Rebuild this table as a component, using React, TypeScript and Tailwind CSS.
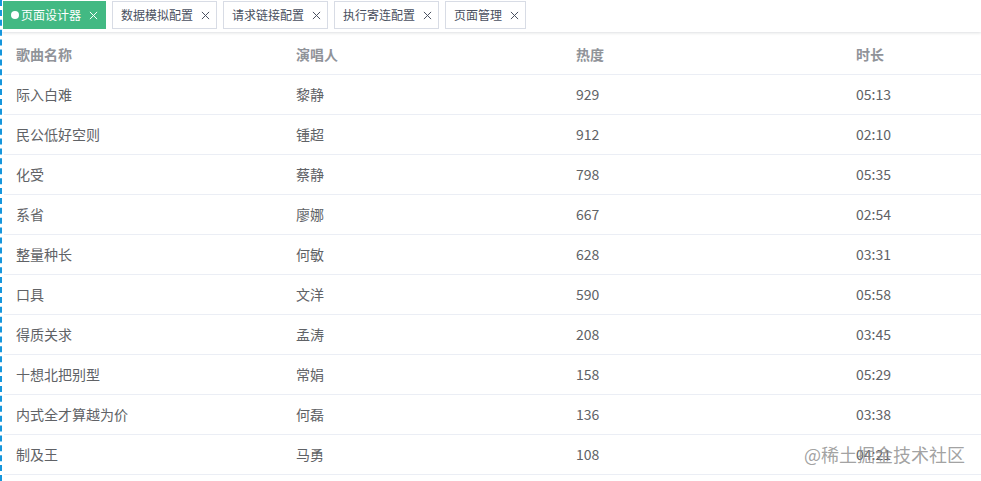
const tabs = [
  { title: "页面设计器", active: true },
  { title: "数据模拟配置" },
  { title: "请求链接配置" },
  { title: "执行寄连配置" },
  { title: "页面管理" },
];

const songs = [
  ["际入白难", "黎静", "929", "05:13"],
  ["民公低好空则", "锺超", "912", "02:10"],
  ["化受", "蔡静", "798", "05:35"],
  ["系省", "廖娜", "667", "02:54"],
  ["整量种长", "何敏", "628", "03:31"],
  ["口具", "文洋", "590", "05:58"],
  ["得质关求", "孟涛", "208", "03:45"],
  ["十想北把别型", "常娟", "158", "05:29"],
  ["内式全才算越为价", "何磊", "136", "03:38"],
  ["制及王", "马勇", "108", "04:21"],
];

function CloseIcon() {
  return (
    <svg width="9" height="9" viewBox="0 0 10 10" className="ml-2">
      <path d="M1 1 L9 9 M9 1 L1 9" stroke="currentColor" strokeWidth="1.1" />
    </svg>
  );
}

export default function App() {
  return (
    <div
      className="relative h-[481px] w-[981px] overflow-hidden border-l-2 border-dashed border-[#1596dc] bg-white"
      style={{ fontFamily: '"Noto Sans CJK SC", "Microsoft YaHei", sans-serif' }}
    >
      <div className="flex h-[32px] items-start gap-[6px] bg-white pl-[1px] pt-[1px] shadow-[0_1px_3px_rgba(0,21,41,0.12),0_0_3px_rgba(0,0,0,0.04)]">
        {tabs.map((tab) =>
          tab.active ? (
            <div
              key={tab.title}
              className="flex h-[28px] items-center border border-[#42b983] bg-[#42b983] pl-[7px] pr-[7px] text-[12px] text-white"
            >
              <span className="mr-[2px] h-[8px] w-[8px] rounded-full bg-white" />
              {tab.title}
              <CloseIcon />
            </div>
          ) : (
            <div
              key={tab.title}
              className="flex h-[28px] items-center border border-[#d8dce5] bg-white pl-[8px] pr-[6px] text-[12px] text-[#495060]"
            >
              {tab.title}
              <CloseIcon />
            </div>
          )
        )}
      </div>

      <div className="ml-[2px] mt-[3px] w-[1120px] text-[14px]">
        <div className="grid h-[40px] grid-cols-[280px_280px_280px_280px] items-center border-b border-[#ebeef5] font-bold text-[#909399]">
          <div className="px-3">歌曲名称</div>
          <div className="px-3">演唱人</div>
          <div className="px-3">热度</div>
          <div className="px-3">时长</div>
        </div>
        {songs.map((row) => (
          <div
            key={row[0]}
            className="grid h-[40px] grid-cols-[280px_280px_280px_280px] items-center border-b border-[#ebeef5] text-[#606266]"
          >
            {row.map((cell, i) => (
              <div key={i} className="px-3">
                {cell}
              </div>
            ))}
          </div>
        ))}
      </div>

      <div className="absolute bottom-[13px] right-[16px] text-[18px] text-[#8a8a8a]/80">
        @稀土掘金技术社区
      </div>
    </div>
  );
}
